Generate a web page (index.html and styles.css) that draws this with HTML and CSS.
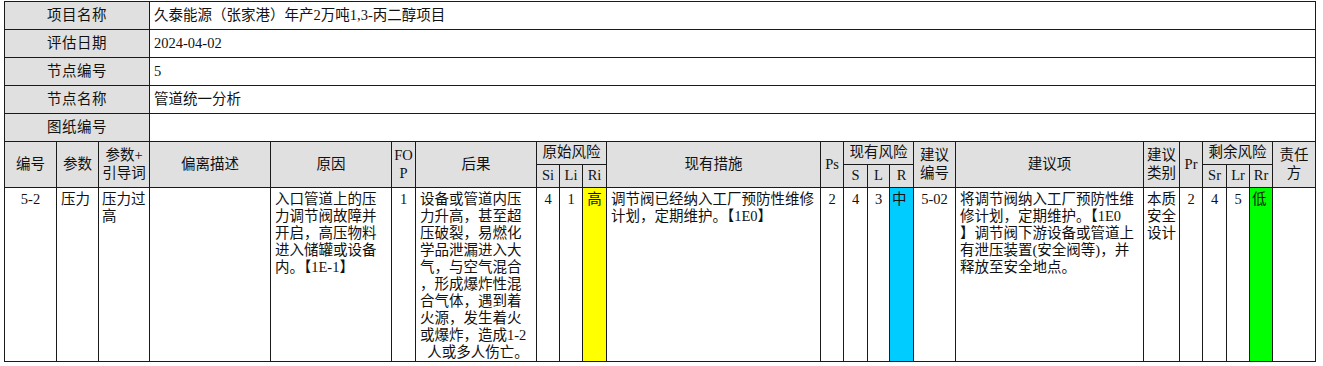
FILE: index.html
```html
<!DOCTYPE html>
<html lang="zh-CN">
<head>
<meta charset="utf-8">
<title>HAZOP 分析表</title>
<link rel="stylesheet" href="styles.css">
</head>
<body>
<table class="sheet">
  <colgroup>
    <col class="w52"><col class="w42"><col class="w51"><col class="w121"><col class="w121"><col class="w24"><col class="w121">
    <col class="w23"><col class="w23"><col class="w24"><col class="w214"><col class="w23"><col class="w24"><col class="w22"><col class="w24">
    <col class="w42"><col class="w188"><col class="w36"><col class="w23"><col class="w24"><col class="w23"><col class="w23"><col class="w43">
  </colgroup>
  <tr class="info"><td class="label" colspan="3">项目名称</td><td class="val" colspan="20">久泰能源（张家港）年产2万吨1,3-丙二醇项目</td></tr>
  <tr class="info"><td class="label" colspan="3">评估日期</td><td class="val" colspan="20">2024-04-02</td></tr>
  <tr class="info"><td class="label" colspan="3">节点编号</td><td class="val" colspan="20">5</td></tr>
  <tr class="info"><td class="label" colspan="3">节点名称</td><td class="val" colspan="20">管道统一分析</td></tr>
  <tr class="info"><td class="label" colspan="3">图纸编号</td><td class="val" colspan="20"></td></tr>
  <tr class="head">
    <th rowspan="2">编号</th>
    <th rowspan="2">参数</th>
    <th rowspan="2">参数+<br>引导词</th>
    <th rowspan="2">偏离描述</th>
    <th rowspan="2">原因</th>
    <th rowspan="2">FO<br>P</th>
    <th rowspan="2">后果</th>
    <th colspan="3">原始风险</th>
    <th rowspan="2">现有措施</th>
    <th rowspan="2">Ps</th>
    <th colspan="3">现有风险</th>
    <th rowspan="2">建议<br>编号</th>
    <th rowspan="2">建议项</th>
    <th rowspan="2">建议<br>类别</th>
    <th rowspan="2">Pr</th>
    <th colspan="3">剩余风险</th>
    <th rowspan="2">责任<br>方</th>
  </tr>
  <tr class="head">
    <th>Si</th><th>Li</th><th>Ri</th>
    <th>S</th><th>L</th><th>R</th>
    <th>Sr</th><th>Lr</th><th>Rr</th>
  </tr>
  <tr class="data">
    <td class="ctr"><div>5-2</div></td>
    <td class="lft"><div>压力</div></td>
    <td class="lft tight"><div>压力过<br>高</div></td>
    <td><div></div></td>
    <td class="lft"><div>入口管道上的压<br>力调节阀故障并<br>开启，高压物料<br>进入储罐或设备<br>内。【1E-1】</div></td>
    <td class="ctr"><div>1</div></td>
    <td class="lft"><div>设备或管道内压<br>力升高，甚至超<br>压破裂，易燃化<br>学品泄漏进入大<br>气，与空气混合<br>，形成爆炸性混<br>合气体，遇到着<br>火源，发生着火<br>或爆炸，造成1-2<br>&ensp;人或多人伤亡。</div></td>
    <td class="ctr"><div>4</div></td>
    <td class="ctr"><div>1</div></td>
    <td class="ctr high"><div>高</div></td>
    <td class="lft"><div>调节阀已经纳入工厂预防性维修<br>计划，定期维护。【1E0】</div></td>
    <td class="ctr"><div>2</div></td>
    <td class="ctr"><div>4</div></td>
    <td class="ctr"><div>3</div></td>
    <td class="lft mid"><div>中</div></td>
    <td class="ctr"><div>5-02</div></td>
    <td class="lft"><div>将调节阀纳入工厂预防性维<br>修计划，定期维护。【1E0<br>】调节阀下游设备或管道上<br>有泄压装置(安全阀等)，并<br>释放至安全地点。</div></td>
    <td class="ctr"><div>本质<br>安全<br>设计</div></td>
    <td class="ctr"><div>2</div></td>
    <td class="ctr"><div>4</div></td>
    <td class="ctr"><div>5</div></td>
    <td class="lft low"><div>低</div></td>
    <td><div></div></td>
  </tr>
</table>
</body>
</html>
```
FILE: styles.css
```css
html, body {
  margin: 0;
  padding: 0;
  background: #ffffff;
}

body {
  font-family: "Liberation Serif", "Noto Sans CJK SC", serif;
  font-size: 14.5px;
  line-height: 17.3px;
  color: #111111;
}

.sheet {
  margin: 1px 0 0 4px;
  width: 1311px;
  table-layout: fixed;
  border-collapse: collapse;
  border: 1.5px solid #1a1a1a;
}

.sheet td,
.sheet th {
  border: 1px solid #1a1a1a;
  padding: 0;
  font-weight: normal;
  white-space: nowrap;
  overflow: hidden;
}

.w22 { width: 22px; }
.w23 { width: 23px; }
.w24 { width: 24px; }
.w36 { width: 36px; }
.w42 { width: 42px; }
.w43 { width: 43px; }
.w51 { width: 51px; }
.w52 { width: 52px; }
.w121 { width: 121px; }
.w188 { width: 188px; }
.w214 { width: 214px; }

.info {
  height: 28px;
}

.label {
  background: #e0e0e0;
  text-align: center;
  letter-spacing: 0.5px;
}

.val {
  padding: 0 4px !important;
  text-align: left;
}

.head {
  height: 23px;
}

.head th {
  background: #e0e0e0;
  text-align: center;
  vertical-align: middle;
}

.data td {
  vertical-align: top;
}

.data td > div {
  height: 173px;
  overflow: hidden;
  padding-top: 3px;
  line-height: 17px;
  box-sizing: border-box;
}

.ctr { text-align: center; }

.lft { text-align: left; }

.lft > div { padding-left: 4px; }

.tight > div { padding-left: 3px; }

.mid > div,
.low > div { padding-left: 2px; }

.high { background: #ffff00; }

.mid { background: #00ccff; }

.low { background: #00ff00; }
```
